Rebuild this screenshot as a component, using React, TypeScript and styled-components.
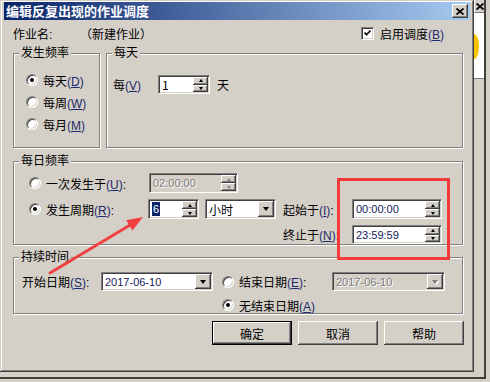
import React from 'react';
import styled, { createGlobalStyle, css } from 'styled-components';

const face = '#d4d0c8';

const GlobalStyle = createGlobalStyle`
  html, body {
    margin: 0;
    padding: 0;
    background: ${face};
    overflow: hidden;
  }
  body {
    font-family: 'Liberation Sans', 'Noto Sans CJK SC', sans-serif;
    font-size: 12px;
    color: #000;
  }
`;

const raised = css`
  box-sizing: border-box;
  background: ${face};
  box-shadow: inset -1px -1px #404040, inset 1px 1px #fff, inset -2px -2px #808080, inset 2px 2px ${face};
`;

const sunken = css`
  box-sizing: border-box;
  border: 1px solid;
  border-color: #808080 #fff #fff #808080;
  box-shadow: inset 1px 1px #404040, inset -1px -1px ${face};
`;

const Desktop = styled.div`
  width: 490px;
  height: 382px;
  background: ${face};
  overflow: hidden;
`;

const BehindFrame = styled.div`
  box-sizing: border-box;
  width: 486px;
  height: 379px;
  border-right: 2px solid #404040;
  border-bottom: 2px solid #404040;
  display: flex;
  align-items: flex-start;
`;

const Dialog = styled.div`
  position: relative;
  box-sizing: border-box;
  width: 475px;
  height: 372px;
  padding: 2px 4px 0 4px;
  background: ${face};
  box-shadow: inset -1px -1px #404040, inset 1px 1px ${face}, inset -2px -2px #808080, inset 2px 2px #fff;
  display: flex;
  flex-direction: column;
`;

const TitleBar = styled.div`
  height: 18px;
  display: flex;
  align-items: center;
  padding: 0 2px;
  background: linear-gradient(to right, #0a246a, #a6caf0);
`;

const Title = styled.span`
  color: #fff;
  font-family: 'Noto Sans CJK SC', sans-serif;
  font-size: 13px;
  font-weight: bold;
  line-height: 18px;
`;

const CloseButton = styled.div`
  ${raised};
  margin-left: auto;
  width: 16px;
  height: 14px;
  display: flex;
  align-items: center;
  justify-content: center;
`;

const CloseGlyph = () => (
  <svg width="8" height="7" viewBox="0 0 8 7">
    <path d="M0.5 0.5 L7.5 6.5 M7.5 0.5 L0.5 6.5" stroke="#000" strokeWidth="1.8" fill="none" />
  </svg>
);

const Body = styled.div`
  display: flex;
  flex-direction: column;
  padding: 4px 7px 0 9px;
`;

const Header = styled.div`
  height: 18px;
  display: flex;
  align-items: center;
`;

const JobLabel = styled.span`
  width: 67px;
`;

const EnableToggle = styled.label`
  margin-left: auto;
  margin-right: 19px;
  display: flex;
  align-items: center;
  gap: 6px;
`;

const CheckBox = styled.span`
  ${sunken};
  width: 13px;
  height: 13px;
  background: #fff;
  display: flex;
  align-items: center;
  justify-content: center;
`;

const CheckMark = () => (
  <svg width="7" height="7" viewBox="0 0 7 7">
    <path d="M0.5 2.5 L2.5 4.8 L6.5 0.6" stroke="#000" strokeWidth="1.7" fill="none" />
  </svg>
);

const Hot = styled.span`
  color: #1e2a6a;
  u {
    text-decoration: underline;
  }
`;

const hk = (k: string) => (
  <Hot>
    (<u>{k}</u>)
  </Hot>
);

const Caption = styled.span`
  white-space: nowrap;
`;

const TopRow = styled.div`
  display: flex;
  gap: 6px;
  margin-top: 11px;
`;

const Group = styled.div<{ $w?: number; $h: number; $top?: number }>`
  position: relative;
  box-sizing: border-box;
  ${(p) => (p.$w ? `width: ${p.$w}px;` : 'flex: 1;')}
  height: ${(p) => p.$h}px;
  margin-top: ${(p) => p.$top ?? 0}px;
  border: 1px solid #808080;
  box-shadow: inset 1px 1px #fff, 1px 1px #fff;
`;

const Legend = styled.span`
  position: absolute;
  top: -8px;
  left: 5px;
  padding: 0 2px;
  background: ${face};
  line-height: 14px;
`;

const RadioStack = styled.div`
  display: flex;
  flex-direction: column;
  gap: 6px;
  padding: 18px 0 0 12px;
`;

const OptionRow = styled.label<{ $w?: number }>`
  display: flex;
  align-items: center;
  gap: 5px;
  height: 16px;
  ${(p) => (p.$w ? `width: ${p.$w}px;` : '')}
  white-space: nowrap;
`;

const RadioDot = styled.span<{ $checked?: boolean }>`
  box-sizing: border-box;
  position: relative;
  flex: none;
  width: 12px;
  height: 12px;
  border-radius: 50%;
  background: #fff;
  border: 1px solid;
  border-color: #808080 #fff #fff #808080;
  box-shadow: inset 1px 1px #404040, inset -1px -1px ${face};
  &::after {
    content: '';
    display: ${(p) => (p.$checked ? 'block' : 'none')};
    position: absolute;
    left: 3px;
    top: 3px;
    width: 4px;
    height: 4px;
    border-radius: 50%;
    background: #000;
  }
`;

const Option = ({ checked, w, children }: { checked?: boolean; w?: number; children: React.ReactNode }) => (
  <OptionRow $w={w}>
    <RadioDot $checked={checked} />
    <span>{children}</span>
  </OptionRow>
);

const DailyRow = styled.div`
  display: flex;
  align-items: center;
  padding: 21px 0 0 6px;
`;

const EveryLabel = styled.span`
  width: 45px;
`;

const Unit = styled.span`
  margin-left: 7px;
`;

const Field = styled.div<{ $w: number; $h?: number; $disabled?: boolean }>`
  ${sunken};
  width: ${(p) => p.$w}px;
  height: ${(p) => p.$h ?? 20}px;
  padding: 1px;
  background: ${(p) => (p.$disabled ? face : '#fff')};
  display: flex;
  align-items: stretch;
`;

const Value = styled.span<{ $disabled?: boolean }>`
  flex: 1;
  display: flex;
  align-items: center;
  padding-left: 2px;
  font-size: 11px;
  color: ${(p) => (p.$disabled ? '#808080' : '#14205a')};
  text-shadow: ${(p) => (p.$disabled ? '1px 1px #fff' : 'none')};
  white-space: nowrap;
  overflow: hidden;
`;

const Selected = styled.span`
  background: #0a246a;
  color: #fff;
  padding: 0 1px;
  line-height: 14px;
`;

const SpinStack = styled.span`
  width: 15px;
  display: flex;
  flex-direction: column;
`;

const SpinBtn = styled.span<{ $down?: boolean; $disabled?: boolean }>`
  ${raised};
  flex: 1;
  display: flex;
  align-items: center;
  justify-content: center;
  &::after {
    content: '';
    width: 0;
    height: 0;
    border-left: 2.5px solid transparent;
    border-right: 2.5px solid transparent;
    ${(p) =>
      p.$down
        ? `border-top: 3px solid ${p.$disabled ? '#808080' : '#000'};`
        : `border-bottom: 3px solid ${p.$disabled ? '#808080' : '#000'};`}
  }
`;

const DropBtn = styled.span<{ $disabled?: boolean }>`
  ${raised};
  width: 16px;
  display: flex;
  align-items: center;
  justify-content: center;
  &::after {
    content: '';
    width: 0;
    height: 0;
    border-left: 3.5px solid transparent;
    border-right: 3.5px solid transparent;
    border-top: 4px solid ${(p) => (p.$disabled ? '#808080' : '#000')};
    filter: ${(p) => (p.$disabled ? 'drop-shadow(1px 1px 0 #fff)' : 'none')};
  }
`;

const Spin = ({ w, h, disabled, children }: { w: number; h?: number; disabled?: boolean; children: React.ReactNode }) => (
  <Field $w={w} $h={h} $disabled={disabled}>
    <Value $disabled={disabled}>{children}</Value>
    <SpinStack>
      <SpinBtn $disabled={disabled} />
      <SpinBtn $down $disabled={disabled} />
    </SpinStack>
  </Field>
);

const Combo = ({ w, h, disabled, children }: { w: number; h?: number; disabled?: boolean; children: React.ReactNode }) => (
  <Field $w={w} $h={h} $disabled={disabled}>
    <Value $disabled={disabled}>{children}</Value>
    <DropBtn $disabled={disabled} />
  </Field>
);

const FreqGrid = styled.div`
  display: grid;
  grid-template-columns: 119px 135px 69px 91px;
  grid-template-rows: 20px 20px 19px;
  row-gap: 6px;
  align-items: center;
  padding: 11px 0 0 15px;
`;

const Cell = styled.div<{ $col: number; $row: number; $shift?: number }>`
  grid-column: ${(p) => p.$col};
  grid-row: ${(p) => p.$row};
  display: flex;
  align-items: center;
  gap: 6px;
  margin-left: ${(p) => p.$shift ?? 0}px;
`;

const ChineseText = styled.span`
  font-family: 'Noto Sans CJK SC', sans-serif;
`;

const Field2 = styled.span`
  font-family: 'Noto Sans CJK SC', sans-serif;
  font-size: 12px;
  color: #000;
`;

const DurationRow = styled.div`
  display: flex;
  align-items: flex-start;
  padding: 14px 0 0 8px;
`;

const StartLabel = styled.span`
  width: 79px;
  height: 19px;
  display: flex;
  align-items: center;
`;

const EndColumn = styled.div`
  margin-left: 9px;
  display: flex;
  flex-direction: column;
  gap: 6px;
`;

const EndRow = styled.div`
  height: 19px;
  display: flex;
  align-items: center;
`;

const ButtonRow = styled.div`
  display: flex;
  justify-content: flex-end;
  gap: 6px;
  margin-top: 7px;
  margin-right: -1px;
`;

const PushButton = styled.div<{ $default?: boolean }>`
  ${raised};
  width: 80px;
  height: 24px;
  display: flex;
  align-items: center;
  justify-content: center;
  font-family: 'Noto Sans CJK SC', sans-serif;
  ${(p) =>
    p.$default &&
    css`
      box-shadow: inset 1px 1px #000, inset -1px -1px #000, inset -2px -2px #404040, inset 2px 2px #fff,
        inset -3px -3px #808080;
    `}
`;

const Highlight = styled.div`
  position: absolute;
  left: 337px;
  top: 178px;
  width: 113px;
  height: 82px;
  box-sizing: border-box;
  border: 3px solid #f23a3a;
  pointer-events: none;
`;

const ArrowLayer = styled.svg`
  position: absolute;
  left: 0;
  top: 0;
  pointer-events: none;
`;

const Peek = styled.div`
  flex: 1;
  display: flex;
  flex-direction: column;
`;

const PeekStub = styled.div`
  box-sizing: border-box;
  height: 13px;
  border-left: 1px solid #fff;
  border-bottom: 1px solid #808080;
  overflow: hidden;
  display: flex;
  align-items: center;
  padding-left: 1px;
`;

const PeekPane = styled.div`
  box-sizing: border-box;
  height: 66px;
  background: #fff;
  border-bottom: 1px solid #808080;
  padding-top: 21px;
`;

const Sun = styled.div`
  width: 5px;
  height: 25px;
  background: #f7c400;
  border-radius: 0 5px 5px 0 / 0 12px 12px 0;
`;

export default function App() {
  return (
    <>
      <GlobalStyle />
      <Desktop>
        <BehindFrame>
          <Dialog>
            <TitleBar>
              <Title>编辑反复出现的作业调度</Title>
              <CloseButton>
                <CloseGlyph />
              </CloseButton>
            </TitleBar>
            <Body>
              <Header>
                <JobLabel>作业名:</JobLabel>
                <ChineseText>（新建作业）</ChineseText>
                <EnableToggle>
                  <CheckBox>
                    <CheckMark />
                  </CheckBox>
                  <span>启用调度{hk('B')}</span>
                </EnableToggle>
              </Header>

              <TopRow>
                <Group $w={87} $h={95}>
                  <Legend>发生频率</Legend>
                  <RadioStack>
                    <Option checked>每天{hk('D')}</Option>
                    <Option>每周{hk('W')}</Option>
                    <Option>每月{hk('M')}</Option>
                  </RadioStack>
                </Group>
                <Group $h={95}>
                  <Legend>每天</Legend>
                  <DailyRow>
                    <EveryLabel>每{hk('V')}</EveryLabel>
                    <Spin w={52} h={19}>
                      <Field2>1</Field2>
                    </Spin>
                    <Unit>天</Unit>
                  </DailyRow>
                </Group>
              </TopRow>

              <Group $h={92} $top={13}>
                <Legend>每日频率</Legend>
                <FreqGrid>
                  <Cell $col={1} $row={1}>
                    <Option>一次发生于{hk('U')}:</Option>
                  </Cell>
                  <Cell $col={2} $row={1} $shift={1}>
                    <Spin w={89} disabled>
                      02:00:00
                    </Spin>
                  </Cell>
                  <Cell $col={1} $row={2}>
                    <Option checked>发生周期{hk('R')}:</Option>
                  </Cell>
                  <Cell $col={2} $row={2}>
                    <Spin w={51}>
                      <Selected>6</Selected>
                    </Spin>
                    <Combo w={71}>
                      <Field2>小时</Field2>
                    </Combo>
                  </Cell>
                  <Cell $col={3} $row={2}>
                    <Caption>起始于{hk('I')}:</Caption>
                  </Cell>
                  <Cell $col={4} $row={2}>
                    <Spin w={90}>00:00:00</Spin>
                  </Cell>
                  <Cell $col={3} $row={3}>
                    <Caption>终止于{hk('N')}:</Caption>
                  </Cell>
                  <Cell $col={4} $row={3}>
                    <Spin w={90} h={19}>
                      23:59:59
                    </Spin>
                  </Cell>
                </FreqGrid>
              </Group>

              <Group $h={66} $top={12}>
                <Legend>持续时间</Legend>
                <DurationRow>
                  <StartLabel>
                    <Caption>开始日期{hk('S')}:</Caption>
                  </StartLabel>
                  <Combo w={112} h={19}>
                    2017-06-10
                  </Combo>
                  <EndColumn>
                    <EndRow>
                      <Option w={110}>结束日期{hk('E')}:</Option>
                      <Combo w={113} h={19} disabled>
                        2017-06-10
                      </Combo>
                    </EndRow>
                    <Option checked>无结束日期{hk('A')}</Option>
                  </EndColumn>
                </DurationRow>
              </Group>

              <ButtonRow>
                <PushButton $default>确定</PushButton>
                <PushButton>取消</PushButton>
                <PushButton>帮助</PushButton>
              </ButtonRow>
            </Body>

            <Highlight />
            <ArrowLayer width="475" height="372" viewBox="0 0 475 372">
              <line x1="50" y1="273" x2="131" y2="224.5" stroke="#f04040" strokeWidth="3" strokeLinecap="round" />
              <polygon points="143,217 132.4,230.6 126.2,220.2" fill="#f04040" />
            </ArrowLayer>
          </Dialog>
          <Peek>
            <PeekStub>
              <CloseGlyph />
            </PeekStub>
            <PeekPane>
              <Sun />
            </PeekPane>
          </Peek>
        </BehindFrame>
      </Desktop>
    </>
  );
}
